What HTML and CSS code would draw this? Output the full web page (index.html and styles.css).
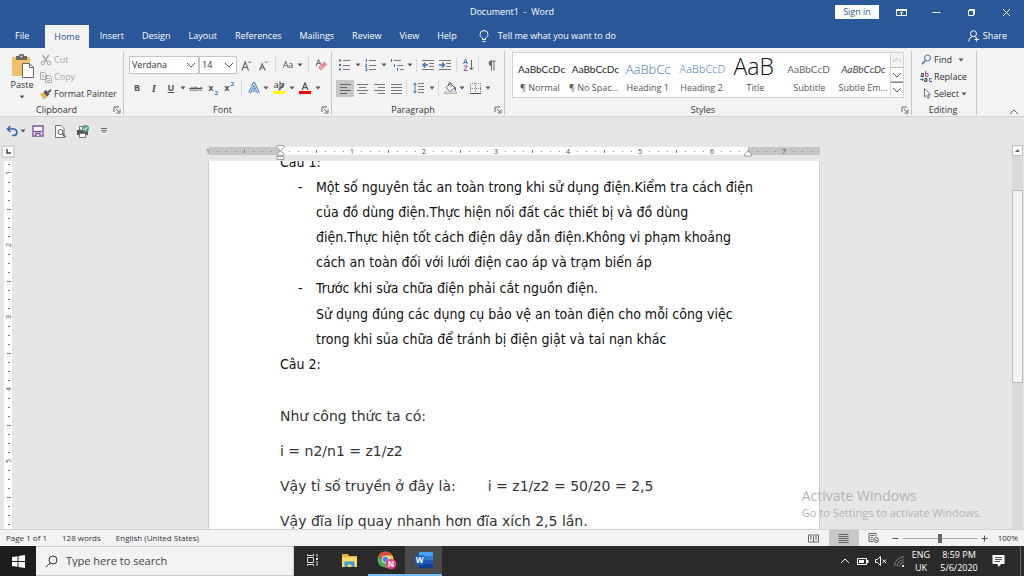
FILE: index.html
```
<!DOCTYPE html>
<html lang="en">
<head>
  <meta charset="UTF-8">
  <meta name="viewport" content="width=device-width, initial-scale=1.0">
  <title>Document1 - Word</title>
  <link rel="stylesheet" href="styles.css">
</head>
<body>
  <!-- shared icons -->
  <svg class="sprite" aria-hidden="true">
    <symbol id="caret" viewBox="0 0 6 4"><path d="M.5.5h5L3 3.500z" fill="#555"/></symbol>
    <symbol id="launcher" viewBox="0 0 8 8"><path d="M1 6V1h5M3 3l3 3M7 3.500V7H3.500" fill="none" stroke="#666"/></symbol>
    <symbol id="up" viewBox="0 0 10 6"><path d="M1 5l4-4 4 4" fill="none" stroke="currentColor"/></symbol>
    <symbol id="down" viewBox="0 0 10 6"><path d="M1 1l4 4 4-4" fill="none" stroke="currentColor"/></symbol>
  </svg>

  <header class="title-bar">
    <h1>Document1&nbsp; -&nbsp; Word</h1>
    <div class="window-buttons">
      <button class="sign-in">Sign in</button>
      <button class="win-btn" aria-label="Ribbon display options"><svg width="11" height="9" viewBox="0 0 11 9" fill="none" stroke="#fff"><path d="M.5 1.500h10v6H.5zM.5 2.500h10M5.500 7V4M4 5.300L5.500 3.800 7 5.300"/></svg></button>
      <button class="win-btn" aria-label="Minimize"><svg width="9" height="9" viewBox="0 0 9 9" stroke="#fff"><path d="M.5 4.500h8"/></svg></button>
      <button class="win-btn" aria-label="Restore"><svg width="9" height="9" viewBox="0 0 9 9" fill="none" stroke="#fff"><path d="M1.500 2.500h5v5h-5zM2.500 2.500v-1h5v5h-1"/></svg></button>
      <button class="win-btn" aria-label="Close"><svg width="9" height="9" viewBox="0 0 9 9" stroke="#fff"><path d="M1 1l7 7M8 1L1 8"/></svg></button>
    </div>
  </header>

  <nav class="tabs">
    <button class="tab file">File</button>
    <button class="tab active">Home</button>
    <button class="tab">Insert</button>
    <button class="tab">Design</button>
    <button class="tab">Layout</button>
    <button class="tab">References</button>
    <button class="tab">Mailings</button>
    <button class="tab">Review</button>
    <button class="tab">View</button>
    <button class="tab">Help</button>
    <button class="tell-me"><svg width="10" height="13" viewBox="0 0 10 13" fill="none" stroke="#fff"><path d="M3.500 9.500V8C2 7 1 6 1 4.500a4 4 0 0 1 8 0C9 6 8 7 6.500 8v1.500zM3.500 11.500h3"/></svg>Tell me what you want to do</button>
    <button class="share"><svg width="12" height="12" viewBox="0 0 12 12" fill="none" stroke="#fff"><circle cx="5.500" cy="3.700" r="3"/><path d="M.8 11.500C1 8.500 2.500 7 4.500 6.500M6.500 6.600l1.500 1M8.500 7.500v4M6.500 9.500h4.500"/></svg>Share</button>
  </nav>

  <section class="ribbon">
    <div class="group clipboard">
      <div class="group-body">
        <button class="paste">
          <svg width="23" height="25" viewBox="0 0 23 25"><path d="M1 3h18v19H1z" fill="#eec06c"/><path d="M5 2h3a2.500 2.500 0 0 1 5 0h3v4H5z" fill="#666"/><circle cx="10.500" cy="2.500" r="1" fill="#eee"/><path d="M11.500 9.500h7l4 4v10h-11z" fill="#fff" stroke="#666"/><path d="M18.500 9.500v4h4" fill="none" stroke="#666"/></svg>
          Paste
          <svg class="caret" width="6" height="4"><use href="#caret"/></svg>
        </button>
        <div class="stack">
          <button class="disabled"><svg width="12" height="12" viewBox="0 0 12 12" fill="none" stroke="#aaa"><path d="M2.500 1l5 7M9 1L4 8" stroke-width="1.400"/><circle cx="3" cy="9" r="1.800"/><circle cx="9" cy="9" r="1.800"/></svg>Cut</button>
          <button class="disabled"><svg width="12" height="12" viewBox="0 0 12 12" fill="#f3f3f3" stroke="#aaa"><path d="M.5 1.500h4l2 2v5h-6zM5.500 4.500h4l2 2v5h-6z"/><path d="M2 4h2M2 6h2M7 7.500h3M7 9.500h3"/></svg>Copy</button>
          <button><svg width="12" height="12" viewBox="0 0 12 12"><path d="M0 6l4-2 4 4-4 3.500z" fill="#e8b45c"/><path d="M3.500 4l2.500-2 3.500 4.500L7 8.500z" fill="#555"/><path d="M7 3.500L10.500 1l1 1.500L9 5.500z" fill="#666"/></svg>Format Painter</button>
        </div>
      </div>
      <div class="group-label"><span>Clipboard</span><svg width="8" height="8"><use href="#launcher"/></svg></div>
    </div>

    <div class="group font">
      <div class="group-body rows">
        <div class="row">
          <select class="font-name" aria-label="Font"><option>Verdana</option></select>
          <select class="font-size" aria-label="Font size"><option>14</option></select>
          <button class="tool wide" aria-label="Increase font size"><svg width="11" height="11" viewBox="0 0 11 11" fill="none" stroke="#666"><path d="M1 10.500L4.200 2 7.500 10.500M2.200 7.500h4" stroke-width="1.200"/><path d="M7.500 3l1.300-1.500L10 3" stroke="#3d6eb0"/></svg></button>
          <button class="tool" aria-label="Decrease font size"><svg width="11" height="11" viewBox="0 0 11 11" fill="none" stroke="#666"><path d="M1.500 10.500L4.200 4l3 6.500M2.500 8h3.500" stroke-width="1.200"/><path d="M7 1.500L8.300 3l1.200-1.500" stroke="#3d6eb0"/></svg></button>
          <span class="sep"></span>
          <button class="tool text">Aa</button><button class="drop" aria-label="Case options"><svg width="6" height="4"><use href="#caret"/></svg></button>
          <span class="sep"></span>
          <button class="tool" aria-label="Clear formatting"><svg width="13" height="13" viewBox="0 0 13 13"><path d="M1 7L3.500.5 6 6M2 4.500h3" fill="none" stroke="#666"/><path d="M3 8.500L9 2.500l3 3-6 6z" fill="#e8899a"/><path d="M4.800 6.800l3 3" stroke="#fff" stroke-width=".8"/></svg></button>
        </div>
        <div class="row">
          <button class="tool text bold">B</button>
          <button class="tool wide text italic">I</button>
          <button class="tool text underline">U</button><button class="drop" aria-label="Underline options"><svg width="6" height="4"><use href="#caret"/></svg></button>
          <button class="tool wide text strike">abc</button>
          <button class="tool text script">x<sub>2</sub></button>
          <button class="tool text script">x<sup>2</sup></button>
          <span class="sep"></span>
          <button class="tool" aria-label="Text effects"><svg width="12" height="12" viewBox="0 0 12 12" fill="none"><path d="M1.500 11L6 1.500 10.500 11M3.500 8h5" stroke="#3f7cc4" stroke-width="2.800"/><path d="M1.500 11L6 1.500 10.500 11M3.500 8h5" stroke="#e8f1fb" stroke-width="1"/></svg></button><button class="drop" aria-label="Text effect options"><svg width="6" height="4"><use href="#caret"/></svg></button>
          <button class="tool wide highlight" aria-label="Highlight"><span>ab</span><svg width="12" height="12" viewBox="0 0 12 12"><path d="M6 8l5-6.500" stroke="#666" stroke-width="2"/><path d="M0 9h12v3H0z" fill="#ff0"/></svg></button><button class="drop" aria-label="Highlight options"><svg width="6" height="4"><use href="#caret"/></svg></button>
          <button class="tool wide" aria-label="Font color"><svg width="12" height="12" viewBox="0 0 12 12"><path d="M3 8L6 1l3 7M4 5.700h4" fill="none" stroke="#555" stroke-width="1.300"/><path d="M0 9h12v3H0z" fill="#f00"/></svg></button><button class="drop" aria-label="Font color options"><svg width="6" height="4"><use href="#caret"/></svg></button>
        </div>
      </div>
      <div class="group-label"><span>Font</span><svg width="8" height="8"><use href="#launcher"/></svg></div>
    </div>

    <div class="group paragraph">
      <div class="group-body rows">
        <div class="row">
          <button class="tool wide" aria-label="Bullets"><svg width="12" height="12" viewBox="0 0 12 12"><path d="M4 1.500h7M4 6.500h7M4 10.500h7" stroke="#777"/><path d="M0 .5h2v2H0zM0 5h2v2H0zM0 9.500h2v2H0z" fill="#3d6eb0"/></svg></button><button class="drop" aria-label="Bullet options"><svg width="6" height="4"><use href="#caret"/></svg></button>
          <button class="tool wide" aria-label="Numbering"><svg width="12" height="12" viewBox="0 0 12 12"><path d="M4 1.500h7M4 6.500h7M4 10.500h7" stroke="#777"/><path d="M.5 1l1-.5V3M.3 5h1.500L.5 7.500H2M.3 9h1.500v2.500H.3" fill="none" stroke="#3d6eb0"/></svg></button><button class="drop" aria-label="Numbering options"><svg width="6" height="4"><use href="#caret"/></svg></button>
          <button class="tool wide" aria-label="Multilevel list"><svg width="13" height="12" viewBox="0 0 13 12"><path d="M3 1.500h7M6 6.500h6M9 10.500h4" stroke="#777"/><path d="M.5 0v3M3.500 5v3M6.500 9v3" stroke="#3d6eb0"/></svg></button><button class="drop" aria-label="Multilevel options"><svg width="6" height="4"><use href="#caret"/></svg></button>
          <span class="sep small"></span>
          <button class="tool" aria-label="Decrease indent"><svg width="12" height="12" viewBox="0 0 12 12" fill="none"><path d="M0 1.500h12M7 4.500h5M7 7.500h5M0 10.500h12" stroke="#777"/><path d="M6 6H1M3.500 3.500L1 6l2.500 2.500" stroke="#3d6eb0" stroke-width="1.400"/></svg></button>
          <button class="tool wide" aria-label="Increase indent"><svg width="12" height="12" viewBox="0 0 12 12" fill="none"><path d="M0 1.500h12M7 4.500h5M7 7.500h5M0 10.500h12" stroke="#777"/><path d="M0 6h5M3 3.500L5.500 6 3 8.500" stroke="#3d6eb0" stroke-width="1.400"/></svg></button>
          <span class="sep small"></span>
          <button class="tool" aria-label="Sort"><svg width="11" height="12" viewBox="0 0 11 12" fill="none"><path d="M.5 5L2.500.5 4.500 5M1.200 3.500h2.600" stroke="#3d6eb0"/><path d="M.8 7h3.500L.8 11.500h4" stroke="#9455a5"/><path d="M8.500 1v10M6.500 8.500l2 2.500 2-2.500" stroke="#666"/></svg></button>
          <span class="sep small"></span>
          <button class="tool wide" aria-label="Show marks"><svg width="9" height="11" viewBox="0 0 9 11"><path d="M4 1h4.500M4.500 1v9.500M7 1v9.500" stroke="#666"/><path d="M4.500.5v5.500a2.700 2.700 0 0 1 0-5.500z" fill="#666"/></svg></button>
        </div>
        <div class="row">
          <button class="tool wide pressed" aria-label="Align left"><svg width="11" height="11" viewBox="0 0 11 11" stroke="#666"><path d="M0 1.500h11M0 4.500h7M0 7.500h11M0 10.500h7"/></svg></button>
          <button class="tool" aria-label="Center"><svg width="11" height="11" viewBox="0 0 11 11" stroke="#777"><path d="M0 1.500h11M2 4.500h7M0 7.500h11M2 10.500h7"/></svg></button>
          <button class="tool wide" aria-label="Align right"><svg width="11" height="11" viewBox="0 0 11 11" stroke="#777"><path d="M0 1.500h11M4 4.500h7M0 7.500h11M4 10.500h7"/></svg></button>
          <button class="tool" aria-label="Justify"><svg width="11" height="11" viewBox="0 0 11 11" stroke="#777"><path d="M0 1.500h11M0 4.500h11M0 7.500h11M0 10.500h11"/></svg></button>
          <span class="sep small"></span>
          <button class="tool wide" aria-label="Line spacing"><svg width="12" height="12" viewBox="0 0 12 12" fill="none"><path d="M5 1.500h6M5 4.500h6M5 7.500h6M5 10.500h6" stroke="#777"/><path d="M2 1v10M.5 3L2 1l1.500 2M.5 9L2 11l1.500-2" stroke="#3d6eb0"/></svg></button><button class="drop" aria-label="Spacing options"><svg width="6" height="4"><use href="#caret"/></svg></button>
          <span class="sep small"></span>
          <button class="tool" aria-label="Shading"><svg width="13" height="12" viewBox="0 0 13 12"><path d="M2 5.500L6.500 1.500l4 4L6 9.500z" fill="#fff" stroke="#666"/><path d="M4.500 4V1.500a1.300 1.300 0 0 1 2.500 0V5" fill="none" stroke="#666"/><path d="M10 4l2 1.500V9l-1.500-1z" fill="#3d6eb0"/><path d="M.5 10h12v1.500H.5z" fill="#fff" stroke="#888" stroke-width=".6"/></svg></button><button class="drop" aria-label="Shading options"><svg width="6" height="4"><use href="#caret"/></svg></button>
          <button class="tool wide" aria-label="Borders"><svg width="11" height="11" viewBox="0 0 11 11" fill="none" stroke="#888"><path d="M.5 0v10M5.500 0v10M10.500 0v10M0 .5h11M0 5.500h11" stroke-dasharray="1 1"/><path d="M0 10.500h11" stroke="#555"/></svg></button><button class="drop" aria-label="Border options"><svg width="6" height="4"><use href="#caret"/></svg></button>
        </div>
      </div>
      <div class="group-label"><span>Paragraph</span><svg width="8" height="8"><use href="#launcher"/></svg></div>
    </div>

    <div class="group styles">
      <div class="group-body">
        <div class="gallery">
          <button class="style"><span class="sample">AaBbCcDc</span>¶ Normal</button>
          <button class="style"><span class="sample">AaBbCcDc</span>¶ No Spac...</button>
          <button class="style"><span class="sample heading1">AaBbCc</span>Heading 1</button>
          <button class="style"><span class="sample heading2">AaBbCcD</span>Heading 2</button>
          <button class="style"><span class="sample title">AaB</span>Title</button>
          <button class="style"><span class="sample subtitle">AaBbCcD</span>Subtitle</button>
          <button class="style"><span class="sample subtle">AaBbCcDc</span>Subtle Em...</button>
          <div class="gallery-scroll">
            <button class="dim" aria-label="Previous styles"><svg width="10" height="6"><use href="#up"/></svg></button>
            <button aria-label="Next styles"><svg width="10" height="6"><use href="#down"/></svg></button>
            <button class="more" aria-label="More styles"><svg width="10" height="6"><use href="#down"/></svg></button>
          </div>
        </div>
      </div>
      <div class="group-label"><span>Styles</span><svg width="8" height="8"><use href="#launcher"/></svg></div>
    </div>

    <div class="group editing">
      <div class="group-body">
        <div class="stack">
          <button><svg width="12" height="11" viewBox="0 0 12 11" fill="none" stroke="#3d6eb0"><circle cx="7.500" cy="4" r="3"/><path d="M5.500 6.500L2 10" stroke-width="1.600"/></svg>Find<svg class="far" width="6" height="4"><use href="#caret"/></svg></button>
          <button><svg width="12" height="12" viewBox="0 0 12 12" fill="none"><path d="M1 2.500h2.500V5.500H1V4h2.500" stroke="#555"/><path d="M5.500 0v5.500H8v-3H5.500" stroke="#9455a5"/><path d="M0 8.500h3M2 7l1.500 1.500L2 10" stroke="#3d6eb0"/><path d="M4.500 7.500H7v3H4.500V9H7" stroke="#555"/><path d="M12 7.500H9.500v3H12" stroke="#3d6eb0"/></svg>Replace</button>
          <button><svg width="12" height="11" viewBox="0 0 12 11"><path d="M4.500.5v8.500l2-1.800L8 10.500l1.300-.7L8 6.700h2.500z" fill="#fff" stroke="#777"/></svg>Select<svg width="6" height="4"><use href="#caret"/></svg></button>
        </div>
      </div>
      <div class="group-label"><span>Editing</span></div>
    </div>
    <button class="collapse" aria-label="Collapse the ribbon"><svg width="10" height="6"><use href="#up"/></svg></button>
  </section>

  <div class="quick-access">
    <button aria-label="Undo"><svg width="12" height="12" viewBox="0 0 12 12" fill="none" stroke="#3568ad" stroke-width="1.600"><path d="M4.500 1L1.500 4l3 3M1.500 4H7a3 3 0 0 1 1 6.500H6"/></svg></button><button class="drop" aria-label="Undo history"><svg width="6" height="4"><use href="#caret"/></svg></button>
    <button aria-label="Save"><svg width="12" height="12" viewBox="0 0 12 12" fill="#fff" stroke="#7d4fa8" stroke-width="1.400"><path d="M1 1h10v10H1z"/><path d="M2 6.500h8M4 11V8.500h4V11"/></svg></button>
    <button aria-label="Print preview"><svg width="12" height="13" viewBox="0 0 12 13" fill="#fff" stroke="#777"><path d="M1.500.5h5.500l3 3v9H1.500z"/><circle cx="6.500" cy="7" r="2.500" stroke="#555"/><path d="M8.500 9l3 3" stroke="#555" stroke-width="1.500"/></svg></button>
    <button aria-label="Quick print"><svg width="13" height="13" viewBox="0 0 13 13"><path d="M1 5h11v5H1z" fill="#555"/><path d="M3.500 1.500h4V5h-4zM3.500 8.500h6v4h-6z" fill="#fff" stroke="#777"/><circle cx="9.500" cy="3.500" r="3.500" fill="#5a9f86"/><path d="M7.800 3.500L9 5l2.300-3" fill="none" stroke="#fff"/></svg></button>
    <button aria-label="Customize toolbar"><svg width="8" height="6" viewBox="0 0 8 6"><path d="M1 .5h6" stroke="#666"/><path d="M1.500 2.500h5L4 5z" fill="none" stroke="#666" stroke-width=".8"/></svg></button>
  </div>

  <main class="workspace">
    <button class="tab-stop" aria-label="Tab stop"><svg width="5" height="5" viewBox="0 0 5 5"><path d="M1 0v4h4" fill="none" stroke="#444" stroke-width="1.500"/></svg></button>

    <svg class="ruler" width="620" height="16" viewBox="-4 0 620 16">
      <defs>
        <pattern id="dots" x="-1" y="2" width="9" height="8" patternUnits="userSpaceOnUse"><path d="M0 4.500h1" stroke="#888"/></pattern>
        <pattern id="halves" x="35" y="2" width="72" height="8" patternUnits="userSpaceOnUse"><path d="M.5 3v3" stroke="#777"/></pattern>
      </defs>
      <path d="M0 2h611v8H0z" fill="#c6c6c6"/>
      <path d="M71 2h468v8H71z" fill="#fff"/>
      <path d="M3 2h606v8H3z" fill="url(#dots)"/>
      <path d="M3 2h606v8H3z" fill="url(#halves)"/>
      <path d="M140 3h6v6h-6zM212 3h6v6h-6zM284 3h6v6h-6zM356 3h6v6h-6zM428 3h6v6h-6zM500 3h6v6h-6z" fill="#fff"/>
      <path d="M572 3h6v6h-6z" fill="#c6c6c6"/>
      <g class="ruler-text"><text x="-1" y="9">1</text><text x="143" y="9">1</text><text x="215" y="9">2</text><text x="287" y="9">3</text><text x="359" y="9">4</text><text x="431" y="9">5</text><text x="503" y="9">6</text><text x="575" y="9">7</text></g>
      <path d="M68 .5h7v2L71.500 6 68 2.500zM68 10V8.500L71.500 6 75 8.500V10zM68 11.500h7v3h-7zM535.500 11V9l3.500-3 3.500 3v2z" fill="#fff" stroke="#888" stroke-width=".8"/>
    </svg>

    <svg class="side-ruler" width="8" height="384" viewBox="0 0 8 384">
      <defs>
        <pattern id="side-dots" y="-1" width="8" height="9" patternUnits="userSpaceOnUse"><path d="M4 4.500h2" stroke="#777"/></pattern>
        <pattern id="side-halves" y="48" width="8" height="72" patternUnits="userSpaceOnUse"><path d="M3 .5h4" stroke="#777"/></pattern>
      </defs>
      <path d="M0 0h8v384H0z" fill="#fff"/>
      <path d="M0 0h8v384H0z" fill="url(#side-dots)"/>
      <path d="M0 0h8v384H0z" fill="url(#side-halves)"/>
      <path d="M0 9h8v7H0zM0 81h8v7H0zM0 153h8v7H0zM0 225h8v7H0zM0 297h8v7H0z" fill="#fff"/>
      <g class="ruler-text"><text transform="translate(7 12) rotate(-90)">1</text><text transform="translate(7 84) rotate(-90)">2</text><text transform="translate(7 156) rotate(-90)">3</text><text transform="translate(7 228) rotate(-90)">4</text><text transform="translate(7 300) rotate(-90)">5</text></g>
    </svg>

    <article class="page" lang="vi">
      <div class="scrolled">
        <p>Câu 1:</p>
        <ul>
          <li>Một số nguyên tắc an toàn trong khi sử dụng điện.Kiểm tra cách điện<br>của đồ dùng điện.Thực hiện nối đất các thiết bị và đồ dùng<br>điện.Thực hiện tốt cách điện dây dẫn điện.Không vi phạm khoảng<br>cách an toàn đối với lưới điện cao áp và trạm biến áp</li>
          <li>Trước khi sửa chữa điện phải cắt nguồn điện.</li>
          <li class="no-dash">Sử dụng đúng các dụng cụ bảo vệ an toàn điện cho mỗi công việc<br>trong khi sủa chữa để tránh bị điện giật và tai nạn khác</li>
        </ul>
        <p>Câu 2:</p>
        <div class="answer">
          <p>Như công thức ta có:</p>
          <p>i = n2/n1 = z1/z2</p>
          <p class="split"><span>Vậy tỉ số truyền ở đây là:</span><span>i = z1/z2 = 50/20 = 2,5</span></p>
          <p>Vậy đĩa líp quay nhanh hơn đĩa xích 2,5 lần.</p>
        </div>
      </div>
    </article>

    <div class="scrollbar">
      <button aria-label="Scroll up"><svg width="5" height="3" viewBox="0 0 5 3"><path d="M0 3L2.500 0 5 3z" fill="#666"/></svg></button>
      <div class="track"><div class="thumb"></div></div>
      <button aria-label="Scroll down"><svg width="5" height="3" viewBox="0 0 5 3"><path d="M0 0l2.500 3L5 0z" fill="#666"/></svg></button>
    </div>

    <div class="activate">
      <p class="activate-title">Activate Windows</p>
      <p>Go to Settings to activate Windows.</p>
    </div>
  </main>

  <footer class="status-bar">
    <span>Page 1 of 1</span>
    <span>128 words</span>
    <span>English (United States)</span>
    <div class="view-tools">
      <button aria-label="Read mode"><svg width="11" height="9" viewBox="0 0 11 9" fill="none" stroke="#666"><path d="M.5 1h4l1 .8 1-.8h4v7h-4l-1 .5-1-.5h-4zM5.500 2v6M2 3h2M2 5h2M7 3h2M7 5h2"/></svg></button>
      <button class="selected" aria-label="Print layout"><svg width="11" height="10" viewBox="0 0 11 10" stroke="#666"><path d="M.5 1.500h10M.5 3.500h10M.5 5.500h10M.5 7.500h10M.5 9.500h10"/></svg></button>
      <button aria-label="Web layout"><svg width="11" height="10" viewBox="0 0 11 10" fill="none" stroke="#666"><path d="M1 .5h7v3M1 .5v8h4M2.500 2.500h4M2.500 4.500h2.500M2.500 6.500h2"/><circle cx="8" cy="7" r="2.400"/><path d="M6.500 6.500l3 1.500"/></svg></button>
      <button class="zoom-step" aria-label="Zoom out"><svg width="7" height="7" viewBox="0 0 7 7" stroke="#555"><path d="M.5 3.500h6"/></svg></button>
      <input class="zoom" type="range" min="0" max="100" value="50" aria-label="Zoom">
      <button class="zoom-step" aria-label="Zoom in"><svg width="7" height="7" viewBox="0 0 7 7" stroke="#555"><path d="M.5 3.500h6M3.500.5v6"/></svg></button>
      <span class="zoom-value">100%</span>
    </div>
  </footer>

  <div class="taskbar">
    <button class="start" aria-label="Start"><svg width="13" height="13" viewBox="0 0 13 13" fill="#fff"><path d="M0 2l5.500-.8V6H0zM6.500 1L13 0v6H6.500zM0 7h5.500v4.800L0 11zM6.500 7H13v6l-6.500-1z"/></svg></button>
    <label class="search">
      <svg width="13" height="13" viewBox="0 0 13 13" fill="none" stroke="#333"><circle cx="8" cy="5" r="4"/><path d="M5 8L.8 12.200"/></svg>
      <input type="text" placeholder="Type here to search" aria-label="Search">
    </label>
    <button class="app" aria-label="Task view"><svg width="13" height="12" viewBox="0 0 13 12" fill="none" stroke="#ddd"><path d="M1.500 3.500h6v5h-6zM1.500 0v1.500h6V0M1.500 12v-1.500h6V12M11 0v3M11 7v5"/><path d="M10 4h2v2h-2z" fill="#ddd" stroke="none"/></svg></button>
    <button class="app" aria-label="File Explorer"><svg width="17" height="15" viewBox="0 0 17 15"><path d="M1 1h6l1 2h8v11H1z" fill="#e9ae37"/><path d="M1 4h15v10H1z" fill="#fbd869"/><path d="M3.500 14V8.500h10V14h-3v-2.500h-4V14z" fill="#3f9bd5"/></svg></button>
    <button class="app running" aria-label="Chrome"><svg width="20" height="19" viewBox="0 0 20 19"><circle cx="8.500" cy="8.500" r="8" fill="#4caf50"/><path d="M1.600 4.500A8 8 0 0 1 15.400 4.500H8.500L5 10.500z" fill="#e0483c"/><path d="M15.400 4.500A8 8 0 0 1 8.500 16.500L12 10.500 8.500 4.500z" fill="#f7cd45"/><circle cx="8.500" cy="8.500" r="3.700" fill="#fff"/><circle cx="8.500" cy="8.500" r="2.900" fill="#4285e8"/><circle cx="14" cy="13" r="5.300" fill="#e5447f"/><text x="14" y="16" class="badge-text">N</text></svg></button>
    <button class="app running current" aria-label="Word"><svg width="18" height="16" viewBox="0 0 18 16"><path d="M5 0h12a1 1 0 0 1 1 1v3.500H4V1a1 1 0 0 1 1-1z" fill="#41a5ee"/><path d="M4 4h14v4H4z" fill="#2b7cd3"/><path d="M4 8h14v4H4z" fill="#185abd"/><path d="M4 12h14v3a1 1 0 0 1-1 1H5a1 1 0 0 1-1-1z" fill="#103f91"/><rect y="3.500" width="9.500" height="9.500" rx="1" fill="#185abd"/><text x="4.700" y="11" class="badge-text">W</text></svg></button>
    <div class="tray">
      <button class="tray-icon" aria-label="Hidden icons"><svg width="10" height="6"><use href="#up"/></svg></button>
      <button class="tray-icon" aria-label="Battery"><svg width="12" height="7" viewBox="0 0 12 7"><path d="M.5.5h9v6h-9z" fill="none" stroke="#fff"/><path d="M2 2h5v3H2zM10 2h1.500v3H10z" fill="#fff"/></svg></button>
      <button class="tray-icon" aria-label="Volume muted"><svg width="12" height="10" viewBox="0 0 12 10" fill="none" stroke="#fff"><path d="M.5 3.500h2l3-3v9l-3-3h-2zM7.500 3.500l3.500 3.500M11 3.500L7.500 7"/></svg></button>
      <button class="tray-icon" aria-label="Network"><svg width="11" height="11" viewBox="0 0 11 11" fill="none" stroke="#888"><path d="M.5 10A9.500 9.500 0 0 1 10 .8M3 10.500A7 7 0 0 1 10 3.800M5.500 10.500A4.500 4.500 0 0 1 10 6.500"/><path d="M8 9h2v2H8z" fill="#ddd" stroke="none"/></svg></button>
      <div class="lang">ENG<br>UK</div>
      <div class="clock">8:59 PM<br>5/6/2020</div>
      <button class="notify" aria-label="Notifications"><svg width="13" height="12" viewBox="0 0 13 12"><path d="M.5 0h12v9H9L6.500 12 5.500 9h-5z" fill="#fff"/><path d="M3 2.500h7M3 4.500h7M3 6.500h5" stroke="#555"/></svg></button>
      <button class="show-desktop" aria-label="Show desktop"></button>
    </div>
  </div>
</body>
</html>
```
FILE: styles.css
```
* {
  box-sizing: border-box;
  margin: 0;
  padding: 0;
}

body {
  display: flex;
  flex-direction: column;
  height: 100vh;
  overflow: hidden;
  background: #e6e6e6;
  color: #333;
  font-family: "Open Sans", "Noto Sans", sans-serif;
  font-size: 9px;
  line-height: 12px;
}

button {
  display: flex;
  align-items: center;
  justify-content: center;
  border: none;
  background: none;
  color: inherit;
  font: inherit;
  white-space: nowrap;
}

svg {
  display: block;
  flex: none;
}

.sprite {
  position: absolute;
  width: 0;
  height: 0;
}

/* Title bar */
.title-bar {
  display: grid;
  grid-template-columns: 1fr auto 1fr;
  align-items: center;
  height: 24px;
  background: #2a579a;
  color: #fff;
}

.title-bar h1 {
  grid-column: 2;
  font-size: 9px;
  font-weight: normal;
}

.window-buttons {
  display: flex;
  justify-content: flex-end;
  align-items: center;
}

.sign-in {
  width: 44px;
  height: 14px;
  margin-right: 5px;
  background: #fff;
  color: #2a579a;
}

.win-btn {
  width: 35px;
  height: 24px;
}

/* Tabs */
.tabs {
  display: flex;
  height: 24px;
  background: #2a579a;
  color: #fff;
}

.tab {
  padding: 0 9px;
}

.tab.file {
  padding: 0 16px 0 15px;
}

.tab.active {
  margin: 1px 2px 0 0;
  background: #f3f3f3;
  color: #2a579a;
}

.tell-me {
  gap: 9px;
  margin-left: 13px;
}

.share {
  gap: 3px;
  margin-left: auto;
  padding-right: 17px;
}

/* Ribbon */
.ribbon {
  display: flex;
  height: 69px;
  padding: 3px 0 1px;
  background: #f3f3f3;
  border-bottom: 1px solid #d2d2d2;
  color: #333;
}

.group {
  display: flex;
  flex-direction: column;
  flex: none;
  border-right: 1px solid #c8c8c8;
}

.group-body {
  display: flex;
  flex: 1;
}

.group-body.rows {
  flex-direction: column;
  gap: 5px;
  padding-top: 5px;
}

.row {
  display: flex;
  align-items: center;
  height: 18px;
}

.group-label {
  display: flex;
  align-items: center;
  height: 11px;
  padding-right: 2px;
}

.group-label span {
  flex: 1;
  text-align: center;
}

.clipboard {
  width: 124px;
}

.font {
  width: 208px;
}

.font .row {
  padding-left: 5px;
}

.paragraph {
  width: 173px;
}

.paragraph .row {
  padding-left: 4px;
}

.styles {
  flex: 1;
}

.styles .group-body {
  padding: 1px 7px 0;
}

.editing {
  width: 65px;
}

.paste {
  flex-direction: column;
  justify-content: flex-start;
  width: 32px;
  margin: 3px 0 0 6px;
}

.paste .caret {
  margin-top: 4px;
}

.stack {
  display: flex;
  flex-direction: column;
}

.stack button {
  justify-content: flex-start;
  gap: 2px;
  height: 17px;
}

.clipboard .stack {
  margin-left: 2px;
}

.editing .stack {
  margin-left: 8px;
}

.stack .far {
  margin-left: 4px;
}

.disabled {
  color: #aaa;
}

.font select {
  height: 18px;
  padding-left: 2px;
  border: 1px solid #c6c6c6;
  border-radius: 0;
  appearance: none;
  background: #fff url("data:image/svg+xml,%3Csvg xmlns='http://www.w3.org/2000/svg' width='10' height='6'%3E%3Cpath d='M1 1l4 4 4-4' fill='none' stroke='%23555'/%3E%3C/svg%3E") no-repeat right 2px center;
  color: #333;
  font: inherit;
}

.font .font-name {
  width: 70px;
}

.font .font-size {
  width: 38px;
}

.tool {
  flex: none;
  width: 16px;
  height: 17px;
}

.tool.wide {
  width: 18px;
}

.tool.text {
  color: #555;
}

.tool.pressed {
  background: #c6c6c6;
}

.drop {
  flex: none;
  width: 8px;
  height: 17px;
}

.sep {
  flex: none;
  width: 1px;
  height: 16px;
  margin: 0 4px;
  background: #dadada;
}

.sep.small {
  margin: 0 3px 0 2px;
}

.tool.bold {
  font-weight: bold;
}

.tool.italic {
  font-family: "Liberation Serif", serif;
  font-style: italic;
  font-weight: bold;
  font-size: 11px;
}

.tool.underline {
  font-weight: bold;
  text-decoration: underline;
}

.tool.strike {
  font-size: 8px;
  text-decoration: line-through;
}

.tool.script {
  gap: 1px;
  font-weight: bold;
}

.script sub,
.script sup {
  color: #3d6eb0;
  font-size: 6px;
  line-height: 8px;
}

.script sub {
  align-self: flex-end;
}

.script sup {
  align-self: flex-start;
}

.highlight {
  display: grid;
}

.highlight span,
.highlight svg {
  grid-area: 1 / 1;
}

.highlight span {
  align-self: start;
  line-height: 10px;
}

/* Style gallery */
.gallery {
  display: flex;
  flex: 1;
  height: 46px;
  border: 1px solid #d2d2d2;
  background: #fff;
}

.style {
  flex: 1 1 0;
  flex-direction: column;
  min-width: 0;
  overflow: hidden;
  color: #555;
}

.sample {
  width: 100%;
  height: 24px;
  margin-bottom: 1px;
  padding-left: 5px;
  overflow: hidden;
  color: #222;
  font-family: Lato, sans-serif;
  font-size: 10px;
  line-height: 24px;
  text-align: left;
}

.sample.heading1 {
  color: #4472b0;
  font-family: "Open Sans", sans-serif;
  font-size: 13px;
  font-weight: 300;
}

.sample.heading2 {
  color: #4472b0;
  font-family: "Open Sans", sans-serif;
  font-size: 11px;
  font-weight: 300;
}

.sample.title {
  color: #111;
  font-family: "Open Sans", sans-serif;
  font-size: 23px;
  font-weight: 300;
  line-height: 18px;
}

.sample.subtitle {
  color: #666;
}

.sample.subtle {
  color: #444;
  font-style: italic;
}

.gallery-scroll {
  display: flex;
  flex-direction: column;
  width: 13px;
  border-left: 1px solid #d2d2d2;
}

.gallery-scroll button {
  flex: 1;
  border-bottom: 1px solid #bbb;
  color: #555;
}

.gallery-scroll .dim {
  background: #f3f3f3;
  color: #bbb;
}

.gallery-scroll .more {
  border-top: 1px solid #888;
  border-bottom: none;
}

.collapse {
  align-self: flex-end;
  width: 47px;
  padding-left: 26px;
  color: #666;
}

/* Quick access toolbar */
.quick-access {
  display: flex;
  align-items: center;
  height: 28px;
  padding-left: 6px;
}

.quick-access button {
  width: 22px;
  height: 20px;
}

.quick-access button:first-child {
  width: 12px;
}

.quick-access .drop {
  width: 9px;
}

/* Document area */
.workspace {
  position: relative;
  display: grid;
  grid-template-columns: 16px 1fr 12px;
  grid-template-rows: 16px 1fr;
  flex: 1;
  min-height: 0;
  overflow: hidden;
}

.tab-stop {
  width: 14px;
  height: 13px;
  margin-left: 1px;
  border: 2px solid #d4d4d4;
  background: #fff;
}

.ruler {
  justify-self: center;
  margin-left: 2px;
}

.ruler-text {
  fill: #444;
  font-size: 7px;
  text-anchor: middle;
}

.side-ruler {
  grid-row: 2;
  margin-left: 4px;
  overflow: visible;
}

.page {
  grid-area: 2 / 2;
  justify-self: center;
  width: 612px;
  max-width: 100%;
  min-height: 0;
  padding: 0 71px;
  overflow: hidden;
  border: solid #cfcfcf;
  border-width: 0 1px;
  background: #fff;
  color: #111;
  font-family: "DejaVu Sans Condensed", "DejaVu Sans", sans-serif;
  font-size: 14px;
  line-height: 25px;
  white-space: nowrap;
}

.scrolled {
  margin-top: -11px;
}

.page ul {
  list-style: none;
}

.page li {
  display: flow-root;
  padding-left: 36px;
}

.page li + li {
  margin-top: 1px;
}

.page li::before {
  content: "-";
  float: left;
  width: 18px;
  margin-left: -18px;
}

.page .no-dash::before {
  content: none;
}

.answer {
  margin-top: 22px;
  color: #333;
  font-family: "DejaVu Sans", sans-serif;
  line-height: 35px;
}

.split {
  display: flex;
  gap: 32px;
}

.scrollbar {
  display: flex;
  grid-area: 1 / 3 / 3 / 4;
  flex-direction: column;
  width: 11px;
  background: #dadada;
}

.scrollbar button {
  height: 11px;
  border: 1px solid #bbb;
  background: #fff;
}

.track {
  flex: 1;
  padding-top: 34px;
}

.thumb {
  height: 56%;
  border: 1px solid #bbb;
  background: #f3f3f3;
}

.activate {
  position: absolute;
  right: 42px;
  bottom: 8px;
  color: #b4b4b4;
  font-size: 11px;
  line-height: 16px;
}

.activate-title {
  font-size: 14px;
  line-height: 18px;
}

/* Status bar */
.status-bar {
  display: flex;
  align-items: center;
  gap: 15px;
  height: 17px;
  padding: 0 6px;
  border-top: 1px solid #d2d2d2;
  background: #f3f3f3;
  font-size: 8px;
}

.view-tools {
  display: flex;
  align-items: center;
  margin-left: auto;
}

.view-tools button {
  width: 30px;
  height: 16px;
}

.view-tools .selected {
  background: #c8c8c8;
}

.view-tools .zoom-step {
  width: 14px;
}

.zoom {
  width: 75px;
  height: 10px;
  appearance: none;
  background: linear-gradient(#aaa, #aaa) center / 100% 1px no-repeat;
}

.zoom::-webkit-slider-thumb {
  appearance: none;
  width: 4px;
  height: 9px;
  background: #666;
}

.zoom-value {
  margin-left: 6px;
}

/* Taskbar */
.taskbar {
  display: flex;
  height: 30px;
  background: #2b2a2b;
  color: #fff;
}

.start {
  width: 36px;
  background: #1d1d1d;
}

.search {
  display: flex;
  align-items: center;
  gap: 8px;
  flex: 0 1 258px;
  padding-left: 9px;
  border: 1px solid #ccc;
  border-left: none;
  background: #f2f2f2;
}

.search input {
  flex: 1;
  min-width: 0;
  border: none;
  background: none;
  font: inherit;
  font-size: 11px;
}

.search input::placeholder {
  color: #444;
}

.app {
  width: 37px;
  border-bottom: 2px solid transparent;
}

.app.running {
  border-bottom-color: #76b9ed;
}

.app.current {
  background: #4a4a4b;
}

.badge-text {
  fill: #fff;
  font-size: 8px;
  font-weight: bold;
  text-anchor: middle;
}

.tray {
  display: flex;
  align-items: center;
  margin-left: auto;
  text-align: center;
}

.tray-icon {
  width: 18px;
  height: 30px;
}

.lang {
  width: 26px;
  line-height: 13px;
}

.clock {
  width: 50px;
  line-height: 13px;
}

.notify {
  width: 28px;
  height: 30px;
}

.show-desktop {
  width: 4px;
  height: 30px;
  margin-left: 8px;
  border-left: 1px solid #666;
}
```
